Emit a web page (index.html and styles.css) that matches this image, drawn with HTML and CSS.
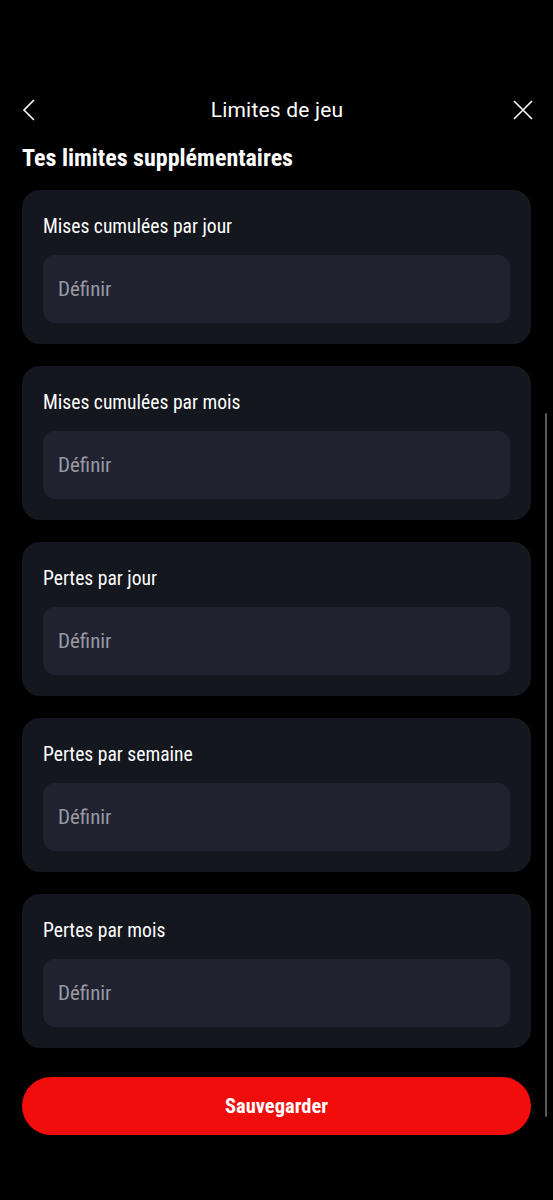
FILE: index.html
```html
<!DOCTYPE html>
<html lang="fr">
<head>
    <meta charset="UTF-8">
    <meta name="viewport" content="width=device-width, initial-scale=1.0">
    <title>Limites de jeu</title>
    <link rel="stylesheet" href="styles.css">
</head>
<body>

<div class="screen">
    <!-- En-tête -->
    <div class="topbar">
        <button class="icon-btn" aria-label="Retour">
            <svg width="14" height="24" viewBox="0 0 14 24"><path d="M12 2 L2 12 L12 22" fill="none" stroke="#fff" stroke-width="1.6"/></svg>
        </button>
        <div class="title">Limites de jeu</div>
        <button class="icon-btn" aria-label="Fermer">
            <svg width="22" height="22" viewBox="0 0 22 22"><path d="M2 2 L20 20 M20 2 L2 20" fill="none" stroke="#fff" stroke-width="1.6"/></svg>
        </button>
    </div>

    <h2>Tes limites supplémentaires</h2>

    <div class="cards">
        <div class="card">
            <label for="dayBets">Mises cumulées par jour</label>
            <input type="text" id="dayBets" placeholder="Définir">
        </div>
        <div class="card">
            <label for="monthBets">Mises cumulées par mois</label>
            <input type="text" id="monthBets" placeholder="Définir">
        </div>
        <div class="card">
            <label for="dayLoss">Pertes par jour</label>
            <input type="text" id="dayLoss" placeholder="Définir">
        </div>
        <div class="card">
            <label for="weekLoss">Pertes par semaine</label>
            <input type="text" id="weekLoss" placeholder="Définir">
        </div>
        <div class="card">
            <label for="monthLoss">Pertes par mois</label>
            <input type="text" id="monthLoss" placeholder="Définir">
        </div>
    </div>

    <button class="save">Sauvegarder</button>

    <div class="scrollbar"></div>
</div>

</body>
</html>
```

FILE: styles.css
```css
/* Styles principaux */
body {
    margin: 0;
    background: #000;
    color: #fff;
    font-family: "Roboto Condensed", "Liberation Sans Narrow", "DejaVu Sans Condensed", sans-serif;
}
.screen {
    position: relative;
    width: 553px;
    min-height: 1200px;
    padding: 92px 22px 0;
    box-sizing: border-box;
}
.topbar {
    display: flex;
    align-items: center;
    justify-content: space-between;
    height: 36px;
}
.icon-btn {
    background: none;
    border: none;
    padding: 0;
    width: 24px;
    height: 24px;
    display: flex;
    align-items: center;
    justify-content: center;
}
.icon-btn:first-child {
    justify-content: flex-start;
}
.icon-btn:last-child {
    justify-content: flex-end;
    width: 26px;
    margin-right: -3px;
}
.title {
    font-family: Roboto, "Noto Sans", sans-serif;
    font-size: 21px;
    letter-spacing: 0.2px;
}
h2 {
    font-size: 24px;
    font-weight: bold;
    margin: 15px 0 17px;
    line-height: 30px;
}
.cards {
    display: flex;
    flex-direction: column;
    gap: 22px;
}
.card {
    background: #15171f;
    border-radius: 18px;
    padding: 25px 21px 21px;
    height: 154px;
    box-sizing: border-box;
}
label {
    display: block;
    font-size: 19.6px;
    line-height: 24px;
    margin-bottom: 16px;
}
input {
    width: 100%;
    height: 68px;
    box-sizing: border-box;
    border: none;
    border-radius: 12px;
    background: #202230;
    padding: 0 15px;
    font-family: inherit;
    font-size: 21px;
    color: #fff;
    outline: none;
}
input::placeholder {
    color: #999aa3;
}
.save {
    display: block;
    width: 100%;
    height: 58px;
    margin-top: 29px;
    border: none;
    border-radius: 29px;
    background: #f20d0d;
    color: #fff;
    font-family: inherit;
    font-size: 20.5px;
    font-weight: bold;
    cursor: pointer;
}
.scrollbar {
    position: absolute;
    right: 6px;
    top: 413px;
    width: 2px;
    height: 704px;
    background: #5a5a5e;
    border-radius: 1px;
}
```
